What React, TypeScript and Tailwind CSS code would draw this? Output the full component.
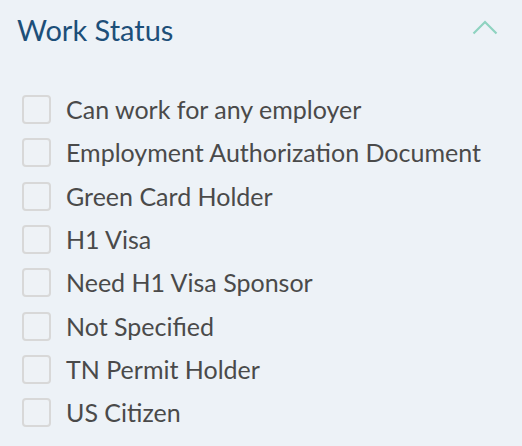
import React from "react";

const items = [
  "Can work for any employer",
  "Employment Authorization Document",
  "Green Card Holder",
  "H1 Visa",
  "Need H1 Visa Sponsor",
  "Not Specified",
  "TN Permit Holder",
  "US Citizen",
];

export default function App() {
  return (
    <div className="w-[522px] h-[446px] bg-[#edf2f7] overflow-hidden" style={{ fontFamily: "Lato, 'Noto Sans', sans-serif" }}>
      <div className="flex items-center justify-between pl-[17px] pr-[24px] pt-[10px]">
        <h2 className="text-[29px] leading-[40px] text-[#1d4f79] font-normal">Work Status</h2>
        <svg width="26" height="15" viewBox="0 0 26 15" fill="none" className="-mt-[5px]">
          <path d="M1.5 13.5 L13 2 L24.5 13.5" stroke="#8fd3c0" strokeWidth="2.2" />
        </svg>
      </div>
      <ul className="flex flex-col pl-[22px] pt-[38px]">
        {items.map((t) => (
          <li key={t} className="flex items-center h-[43.3px] gap-[15px]">
            <span className="w-[29px] h-[29px] rounded-[4px] border-2 border-[#d8d8d8] bg-[#eef2f6] shrink-0" />
            <span className="text-[25px] text-[#4a4a4a] leading-none">{t}</span>
          </li>
        ))}
      </ul>
    </div>
  );
}
